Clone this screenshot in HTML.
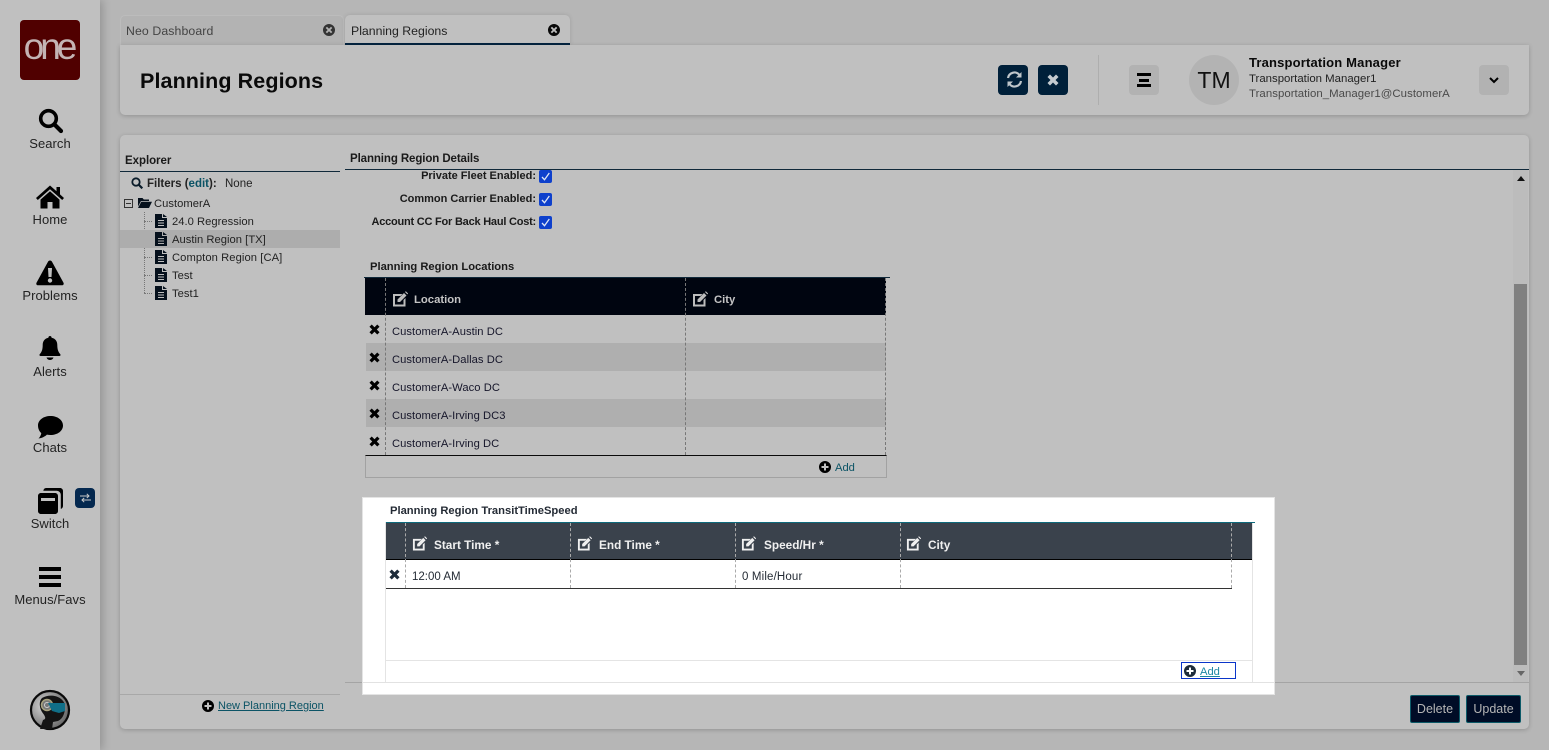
<!DOCTYPE html>
<html lang="en"><head><meta charset="utf-8"><title>Planning Regions</title>
<style>
html,body{margin:0;padding:0;width:1549px;height:750px;overflow:hidden;background:#b6b6b6;font-family:"Liberation Sans",sans-serif;color:#111}
*{box-sizing:border-box}
.a,.t{position:absolute}
.t{white-space:nowrap;line-height:16px;height:16px;font-size:11.2px}
.b{font-weight:bold}
.nav{width:100px;left:0;text-align:center;font-size:13px;color:#222;letter-spacing:.05px}
.tree{font-size:11.2px;letter-spacing:.03px;color:#222}
.cell{font-size:11.2px;letter-spacing:.05px;color:#16162a}
.lab{font-size:11px;color:#1a1a1a}
svg{position:absolute;display:block;overflow:visible}
.dash{position:absolute;width:0;border-left:1px dashed #777}
.wdash{position:absolute;width:0;border-left:1px dashed #aaa}
.row{position:absolute;left:366px;width:520px;height:28px}
.link{color:#0b5365;text-decoration:underline}
.th{color:#c4c4c4;font-weight:bold;font-size:11.3px}
.th2{color:#f0f0f0;font-weight:bold;font-size:11.8px}
.btn{position:absolute;top:695px;height:28px;background:#000c26;border:1px solid #0c5a68;border-radius:2px;color:#b5b5b5;font-size:12.5px;text-align:center;line-height:27px}
</style></head><body>
<svg width="0" height="0" style="position:absolute"><defs>
<symbol id="x" viewBox="0 0 12 12"><path d="M3 .5 6 3.500 9 .5 11.500 3 8.500 6 11.500 9 9 11.500 6 8.500 3 11.500 .5 9 3.500 6 .5 3Z"/></symbol>
<symbol id="edit" viewBox="0 0 16 16"><path d="M1 3h9.500l-2 2H3v8.500h8.500V9l2-2v8.500H1Z"/><path d="M5.500 8.500 12 2l2.500 2.500L8 11H5.500ZM13 1l.8-.8 2.300 2.300-.8.9Z"/></symbol>
<symbol id="doc" viewBox="0 0 12 14"><path fill-rule="evenodd" d="M0 0h7v4h5v10H0ZM8 0l4 3H8ZM3 6v1h6V6ZM3 8.500v1h6v-1ZM3 11v1h6v-1Z"/></symbol>
<symbol id="plus" viewBox="0 0 12 12"><path fill-rule="evenodd" d="M6 0a6 6 0 1 0 0 12A6 6 0 0 0 6 0ZM5 2.500h2V5h2.500v2H7v2.500H5V7H2.500V5H5Z"/></symbol>
<symbol id="cx" viewBox="0 0 12 12"><path fill-rule="evenodd" d="M6 0a6 6 0 1 0 0 12A6 6 0 0 0 6 0ZM4 2.700 6 4.700l2-2L9.300 4l-2 2 2 2L8 9.300l-2-2-2 2L2.700 8l2-2-2-2Z"/></symbol>
<symbol id="chk" viewBox="0 0 13 13"><rect width="13" height="13" rx="2" fill="#0e40cc"/><path d="M3 7l2.500 2.700L10.300 3" fill="none" stroke="#dfe6f5" stroke-width="1.300"/></symbol>
</defs></svg>

<!-- sidebar -->
<div class="a" style="left:0;top:0;width:100px;height:750px;background:#c0c0c0;box-shadow:3px 0 8px rgba(0,0,0,.18)"></div>
<div class="a" style="left:20px;top:20px;width:60px;height:60px;background:#500000;border-radius:4px"></div>
<div class="t" style="left:20px;top:29px;width:60px;height:36px;line-height:36px;text-align:center;color:#c4b4b4;font-size:37px;letter-spacing:-4px;text-indent:-3px">one</div>

<svg style="left:38px;top:108px" width="26" height="26" viewBox="0 0 26 26"><circle cx="10.500" cy="10.500" r="7.800" fill="none" stroke="#000" stroke-width="3.600"/><path d="M16.500 16.500 23 23" stroke="#000" stroke-width="4.200" stroke-linecap="round"/></svg>
<div class="t nav" style="top:136px">Search</div>
<svg style="left:36px;top:185px" width="28" height="24" viewBox="0 0 28 24"><path d="M14 .5 0 13l1.800 2L14 4.300 26.200 15l1.800-2-4-3.600V2h-3.500v4.200Z"/><path d="M14 6.300 4.500 14.600V23.500h7v-6.500h5v6.500h7v-8.900Z"/></svg>
<div class="t nav" style="top:212px">Home</div>
<svg style="left:36px;top:260px" width="28" height="26" viewBox="0 0 28 26"><path fill-rule="evenodd" d="M14 .5c1 0 1.600.5 2 1.200l11.500 21c.6 1.200-.1 2.600-1.600 2.600H2.100C.6 25.300-.1 23.900.5 22.700L12 1.700C12.400 1 13 .5 14 .5ZM12 8l.5 9h3l.5-9ZM14 18.300a2.200 2.200 0 1 0 0 4.400 2.200 2.200 0 0 0 0-4.400Z"/></svg>
<div class="t nav" style="top:288px">Problems</div>
<svg style="left:39px;top:336px" width="22" height="26" viewBox="0 0 22 26"><path d="M11 0c1 0 1.600.7 1.600 1.700 3.700.7 5.700 3.500 5.700 7.300 0 4.500 1 7 3 9.300.5.600.3 1.700-.8 1.700H1.500C.4 20 .2 18.900.7 18.300c2-2.300 3-4.800 3-9.300 0-3.800 2-6.600 5.700-7.300C9.400.7 10 0 11 0Z"/><path d="M7.500 21.500h7c-.5 1.600-2 2.500-3.500 2.500s-3-.9-3.500-2.500Z"/></svg>
<div class="t nav" style="top:364px">Alerts</div>
<svg style="left:38px;top:416px" width="25" height="23" viewBox="0 0 25 23"><path d="M12.500 0C19.500 0 25 4 25 9.500S19.500 19 12.500 19c-1.300 0-2.500-.1-3.600-.4C7 20.500 4 22 .5 22.500c1.500-1.500 2.500-3.300 2.800-5.400C1.200 15.300 0 12.500 0 9.500 0 4 5.500 0 12.500 0Z"/></svg>
<div class="t nav" style="top:440px">Chats</div>
<svg style="left:38px;top:488px" width="25" height="26" viewBox="0 0 25 26"><path d="M8 0h14c1.700 0 3 1.300 3 3v15c0 1.500-1 2.600-2.200 2.900V7c0-2.400-1.800-4.200-4.200-4.200H5.300C5.600 1.100 6.600 0 8 0Z"/><path fill-rule="evenodd" d="M3 5h14c1.700 0 3 1.300 3 3v15c0 1.700-1.300 3-3 3H3c-1.700 0-3-1.300-3-3V8c0-1.700 1.300-3 3-3ZM3 10v3h14v-3Z"/></svg>
<div class="t nav" style="top:516px">Switch</div>
<div class="a" style="left:75px;top:488px;width:20px;height:20px;background:#04284f;border-radius:4px"></div>
<svg style="left:80px;top:493px" width="11" height="10" viewBox="0 0 11 10"><path d="M0 3h8.500M6.800.8 9 3 6.800 5M11 7H2.500M4.200 4.900 2 7l2.200 2.200" fill="none" stroke="#c9c9c9" stroke-width="1"/></svg>
<div class="a" style="left:39px;top:567px;width:22px;height:4px;background:#000"></div>
<div class="a" style="left:39px;top:575px;width:22px;height:4px;background:#000"></div>
<div class="a" style="left:39px;top:583px;width:22px;height:4px;background:#000"></div>
<div class="t nav" style="top:592px">Menus/Favs</div>
<svg style="left:30px;top:690px" width="40" height="40" viewBox="0 0 40 40"><defs><radialGradient id="ag" cx=".35" cy=".4" r=".75"><stop offset="0" stop-color="#d6d6d6"/><stop offset="1" stop-color="#5a5a5a"/></radialGradient></defs><circle cx="20" cy="20" r="19" fill="url(#ag)" stroke="#0a0a0a" stroke-width="2.200"/><path d="M12 8c8-5 22-2 23 8 .4 6-2 13-7 15l-5 1-1 7H10l3-9c4-1 2-4-1-8-3-5-3-11 0-14Z" fill="#141414"/><circle cx="17" cy="15" r="5.500" fill="#777" stroke="#a8a27e" stroke-width="1.500"/><circle cx="17" cy="15" r="2.500" fill="none" stroke="#cfcfcf" stroke-width="1"/><path d="M18 13h17v8l-6 2-7-2Z" fill="#106f88"/></svg>

<!-- tabs -->
<div class="a" style="left:120px;top:15px;width:224px;height:30px;background:#b3b3b3;border:1px solid #bcbcbc;border-bottom:0;border-radius:5px 5px 0 0"></div>
<div class="t" style="left:126px;top:23px;color:#444;font-size:12.300px;letter-spacing:.1px">Neo Dashboard</div>
<svg style="left:323px;top:24px;fill:#333" width="12" height="12"><use href="#cx"/></svg>
<div class="a" style="left:345px;top:15px;width:225px;height:30px;background:#c0c0c0;border-bottom:2px solid #04243f;border-radius:5px 5px 0 0;box-shadow:0 0 4px rgba(0,0,0,.12)"></div>
<div class="t" style="left:351px;top:23px;color:#222;font-size:12.300px">Planning Regions</div>
<svg style="left:548px;top:24px;fill:#080808" width="12" height="12"><use href="#cx"/></svg>

<!-- header -->
<div class="a" style="left:120px;top:45px;width:1409px;height:70px;background:#c0c0c0;border-radius:0 0 5px 5px;box-shadow:0 1px 5px rgba(0,0,0,.2)"></div>
<div class="t b" style="left:140px;top:66px;height:30px;line-height:30px;font-size:21.500px;color:#0a0a0a;letter-spacing:.1px">Planning Regions</div>
<div class="a" style="left:998px;top:65px;width:30px;height:30px;background:#00203a;border-radius:4px"></div>
<svg style="left:1006px;top:71px" width="17" height="17" viewBox="0 0 17 17"><path d="M2 7a6.500 6.500 0 0 1 11.300-3.300M15 10a6.500 6.500 0 0 1-11.300 3.300" fill="none" stroke="#bfc6cb" stroke-width="2.200"/><path d="M15.500 1v5.500H10ZM1.500 16v-5.500H7Z" fill="#bfc6cb"/></svg>
<div class="a" style="left:1038px;top:65px;width:30px;height:30px;background:#00203a;border-radius:4px"></div>
<svg style="left:1047px;top:74px;fill:#c5cbd0" width="12" height="12"><use href="#x"/></svg>
<div class="a" style="left:1098px;top:55px;width:1px;height:50px;background:#aeaeae"></div>
<div class="a" style="left:1129px;top:65px;width:30px;height:30px;background:#b2b2b2;border-radius:4px"></div>
<div class="a" style="left:1137px;top:73px;width:14px;height:3px;background:#000"></div>
<div class="a" style="left:1139px;top:79px;width:10px;height:3px;background:#000"></div>
<div class="a" style="left:1137px;top:84px;width:14px;height:3px;background:#000"></div>
<div class="a" style="left:1189px;top:55px;width:50px;height:50px;background:#b3b3b3;border-radius:50%"></div>
<div class="t" style="left:1189px;top:66px;width:50px;height:28px;line-height:28px;text-align:center;font-size:23px;color:#111">TM</div>
<div class="t b" style="left:1249px;top:55px;font-size:13px;letter-spacing:.17px;color:#0a0a0a">Transportation Manager</div>
<div class="t" style="left:1249px;top:71px;font-size:11.400px;color:#222">Transportation Manager1</div>
<div class="t" style="left:1249px;top:86px;font-size:11.400px;letter-spacing:.05px;color:#4a4a4a">Transportation_Manager1@CustomerA</div>
<div class="a" style="left:1479px;top:65px;width:30px;height:30px;background:#b2b2b2;border-radius:4px"></div>
<svg style="left:1489px;top:77px" width="10" height="7" viewBox="0 0 10 7"><path d="M1 1l4 4 4-4" fill="none" stroke="#000" stroke-width="2"/></svg>

<!-- main panel -->
<div class="a" style="left:120px;top:135px;width:1409px;height:594px;background:#c0c0c0;border-radius:5px;box-shadow:0 1px 5px rgba(0,0,0,.2)"></div>

<!-- explorer -->
<div class="t b" style="left:125px;top:153px;font-size:11.500px;letter-spacing:-.05px;color:#1a1a1a">Explorer</div>
<div class="a" style="left:120px;top:171px;width:220px;height:1px;background:#10293a"></div>
<svg style="left:131px;top:177px" width="12" height="12" viewBox="0 0 12 12"><circle cx="5" cy="5" r="3.700" fill="none" stroke="#0a1c2a" stroke-width="1.800"/><path d="M8 8l3.300 3.300" stroke="#0a1c2a" stroke-width="2.200"/></svg>
<div class="t b" style="left:147px;top:176px;font-size:11.500px;color:#222">Filters (<span style="color:#0b5365">edit</span>):</div>
<div class="t" style="left:225px;top:176px;font-size:11.500px;color:#222">None</div>
<div class="a" style="left:124px;top:199px;width:9px;height:9px;border:1px solid #333"></div>
<div class="a" style="left:126px;top:203px;width:5px;height:1px;background:#333"></div>
<svg style="left:138px;top:197px" width="14" height="11" viewBox="0 0 14 11"><path d="M0 1h4.500l1.300 1.500H11V4H3L0 9.500ZM3.300 4.800H14L11 11H0Z" fill="#05101c"/></svg>
<div class="t tree" style="left:154px;top:196px">CustomerA</div>
<div class="a" style="left:144px;top:212px;width:0;height:81px;border-left:1px dotted #777"></div>
<div class="a" style="left:144px;top:221px;width:8px;border-top:1px dotted #777"></div>
<div class="a" style="left:144px;top:239px;width:8px;border-top:1px dotted #777"></div>
<div class="a" style="left:144px;top:257px;width:8px;border-top:1px dotted #777"></div>
<div class="a" style="left:144px;top:275px;width:8px;border-top:1px dotted #777"></div>
<div class="a" style="left:144px;top:293px;width:8px;border-top:1px dotted #777"></div>
<div class="a" style="left:120px;top:230px;width:220px;height:18px;background:#adadad"></div>
<svg style="left:155px;top:214px;fill:#05101c" width="12" height="14"><use href="#doc"/></svg>
<svg style="left:155px;top:232px;fill:#05101c" width="12" height="14"><use href="#doc"/></svg>
<svg style="left:155px;top:250px;fill:#05101c" width="12" height="14"><use href="#doc"/></svg>
<svg style="left:155px;top:268px;fill:#05101c" width="12" height="14"><use href="#doc"/></svg>
<svg style="left:155px;top:286px;fill:#05101c" width="12" height="14"><use href="#doc"/></svg>
<div class="t tree" style="left:172px;top:214px">24.0 Regression</div>
<div class="t tree" style="left:172px;top:232px">Austin Region [TX]</div>
<div class="t tree" style="left:172px;top:250px;letter-spacing:.08px">Compton Region [CA]</div>
<div class="t tree" style="left:172px;top:268px">Test</div>
<div class="t tree" style="left:172px;top:286px">Test1</div>
<div class="a" style="left:120px;top:694px;width:220px;height:1px;background:#a8a8a8"></div>
<svg style="left:202px;top:700px;fill:#000" width="12" height="12"><use href="#plus"/></svg>
<div class="t link" style="left:218px;top:698px;font-size:11px">New Planning Region</div>

<!-- details -->
<div class="t b" style="left:350px;top:151px;font-size:11.500px;letter-spacing:-.1px;color:#1a1a1a">Planning Region Details</div>
<div class="a" style="left:345px;top:169px;width:1184px;height:1px;background:#10293a"></div>
<div class="a" style="left:1513px;top:170px;width:15px;height:512px;background:#bcbcbc"></div>
<div class="a" style="left:1514px;top:284px;width:13px;height:381px;background:#808080"></div>
<svg style="left:1517px;top:176px" width="8" height="5"><path d="M0 5 4 0l4 5Z" fill="#111"/></svg>
<svg style="left:1517px;top:671px" width="8" height="5"><path d="M0 0l4 5 4-5Z" fill="#666"/></svg>
<div class="t b lab" style="right:1013px;top:168px">Private Fleet Enabled:</div>
<div class="t b lab" style="right:1013px;top:191px">Common Carrier Enabled:</div>
<div class="t b lab" style="right:1013px;top:214px;letter-spacing:-.22px">Account CC For Back Haul Cost:</div>
<svg style="left:539px;top:170px" width="13" height="13"><use href="#chk"/></svg>
<svg style="left:539px;top:193px" width="13" height="13"><use href="#chk"/></svg>
<svg style="left:539px;top:216px" width="13" height="13"><use href="#chk"/></svg>

<!-- locations table -->
<div class="t b" style="left:370px;top:259px;font-size:11.200px;color:#1a1a1a">Planning Region Locations</div>
<div class="a" style="left:364px;top:277px;width:526px;height:1px;background:#10293a"></div>
<div class="a" style="left:365px;top:278px;width:521px;height:37px;background:#000510"></div>
<div class="row" style="top:343px;background:#afafaf"></div>
<div class="row" style="top:399px;background:#afafaf"></div>
<div class="a" style="left:365px;top:455px;width:522px;height:23px;border:1px solid #a2a2a2;border-top:1px solid #0a0a0a"></div>
<div class="dash" style="left:385px;top:278px;height:177px"></div>
<div class="dash" style="left:685px;top:278px;height:177px"></div>
<div class="dash" style="left:885px;top:278px;height:177px"></div>
<svg style="left:392px;top:291px;fill:#bdbdbd" width="16" height="16"><use href="#edit"/></svg>
<div class="t th" style="left:414px;top:292px">Location</div>
<svg style="left:692px;top:291px;fill:#bdbdbd" width="16" height="16"><use href="#edit"/></svg>
<div class="t th" style="left:714px;top:292px">City</div>
<svg style="left:369px;top:324px;fill:#000" width="11" height="11"><use href="#x"/></svg>
<svg style="left:369px;top:352px;fill:#000" width="11" height="11"><use href="#x"/></svg>
<svg style="left:369px;top:380px;fill:#000" width="11" height="11"><use href="#x"/></svg>
<svg style="left:369px;top:408px;fill:#000" width="11" height="11"><use href="#x"/></svg>
<svg style="left:369px;top:436px;fill:#000" width="11" height="11"><use href="#x"/></svg>
<div class="t cell" style="left:392px;top:324px">CustomerA-Austin DC</div>
<div class="t cell" style="left:392px;top:352px">CustomerA-Dallas DC</div>
<div class="t cell" style="left:392px;top:380px">CustomerA-Waco DC</div>
<div class="t cell" style="left:392px;top:408px">CustomerA-Irving DC3</div>
<div class="t cell" style="left:392px;top:436px">CustomerA-Irving DC</div>
<svg style="left:819px;top:461px;fill:#000" width="12" height="12"><use href="#plus"/></svg>
<div class="t" style="left:835px;top:460px;color:#0b5365">Add</div>

<!-- footer -->
<div class="a" style="left:345px;top:682px;width:1184px;height:1px;background:#a4a4a4"></div>
<div class="btn" style="left:1410px;width:50px">Delete</div>
<div class="btn" style="left:1466px;width:55px">Update</div>

<!-- highlighted -->
<div class="a" style="left:362px;top:497px;width:913px;height:198px;background:#fff;border:1px solid #e4e4e4"></div>
<div class="t b" style="left:390px;top:503px;color:#242b35">Planning Region TransitTimeSpeed</div>
<div class="a" style="left:363px;top:682px;width:911px;height:1px;background:#e2e2e2"></div>
<div class="a" style="left:385px;top:522px;width:868px;height:160px;border-left:1px solid #e4e4e4;border-right:1px solid #e4e4e4"></div>
<div class="a" style="left:386px;top:522px;width:869px;height:1px;background:#0e6a7c"></div>
<div class="a" style="left:386px;top:523px;width:866px;height:37px;background:#3a424c;border-bottom:1px solid #000"></div>
<div class="a" style="left:386px;top:588px;width:846px;height:1px;background:#333"></div>
<div class="a" style="left:386px;top:660px;width:866px;height:1px;background:#e4e4e4"></div>
<div class="wdash" style="left:405px;top:523px;height:65px"></div>
<div class="wdash" style="left:570px;top:523px;height:65px"></div>
<div class="wdash" style="left:735px;top:523px;height:65px"></div>
<div class="wdash" style="left:900px;top:523px;height:65px"></div>
<div class="wdash" style="left:1231px;top:523px;height:65px"></div>
<svg style="left:412px;top:536px;fill:#f0f0f0" width="15" height="15"><use href="#edit"/></svg>
<div class="t th2" style="left:434px;top:537px">Start Time *</div>
<svg style="left:577px;top:536px;fill:#f0f0f0" width="15" height="15"><use href="#edit"/></svg>
<div class="t th2" style="left:599px;top:537px">End Time *</div>
<svg style="left:741px;top:536px;fill:#f0f0f0" width="15" height="15"><use href="#edit"/></svg>
<div class="t th2" style="left:764px;top:537px">Speed/Hr *</div>
<svg style="left:906px;top:536px;fill:#f0f0f0" width="15" height="15"><use href="#edit"/></svg>
<div class="t th2" style="left:928px;top:537px">City</div>
<svg style="left:389px;top:569px;fill:#1d2b3a" width="11" height="11"><use href="#x"/></svg>
<div class="t" style="left:412px;top:569px;font-size:11.500px;color:#242b35">12:00 AM</div>
<div class="t" style="left:742px;top:569px;font-size:11.500px;letter-spacing:.15px;color:#242b35">0 Mile/Hour</div>
<div class="a" style="left:1181px;top:662px;width:55px;height:17px;border:1px solid #0a35c9"></div>
<svg style="left:1184px;top:665px;fill:#1d2b3a" width="12" height="12"><use href="#plus"/></svg>
<div class="t" style="left:1200px;top:664px;color:#1c87a3;text-decoration:underline">Add</div>
</body></html>
